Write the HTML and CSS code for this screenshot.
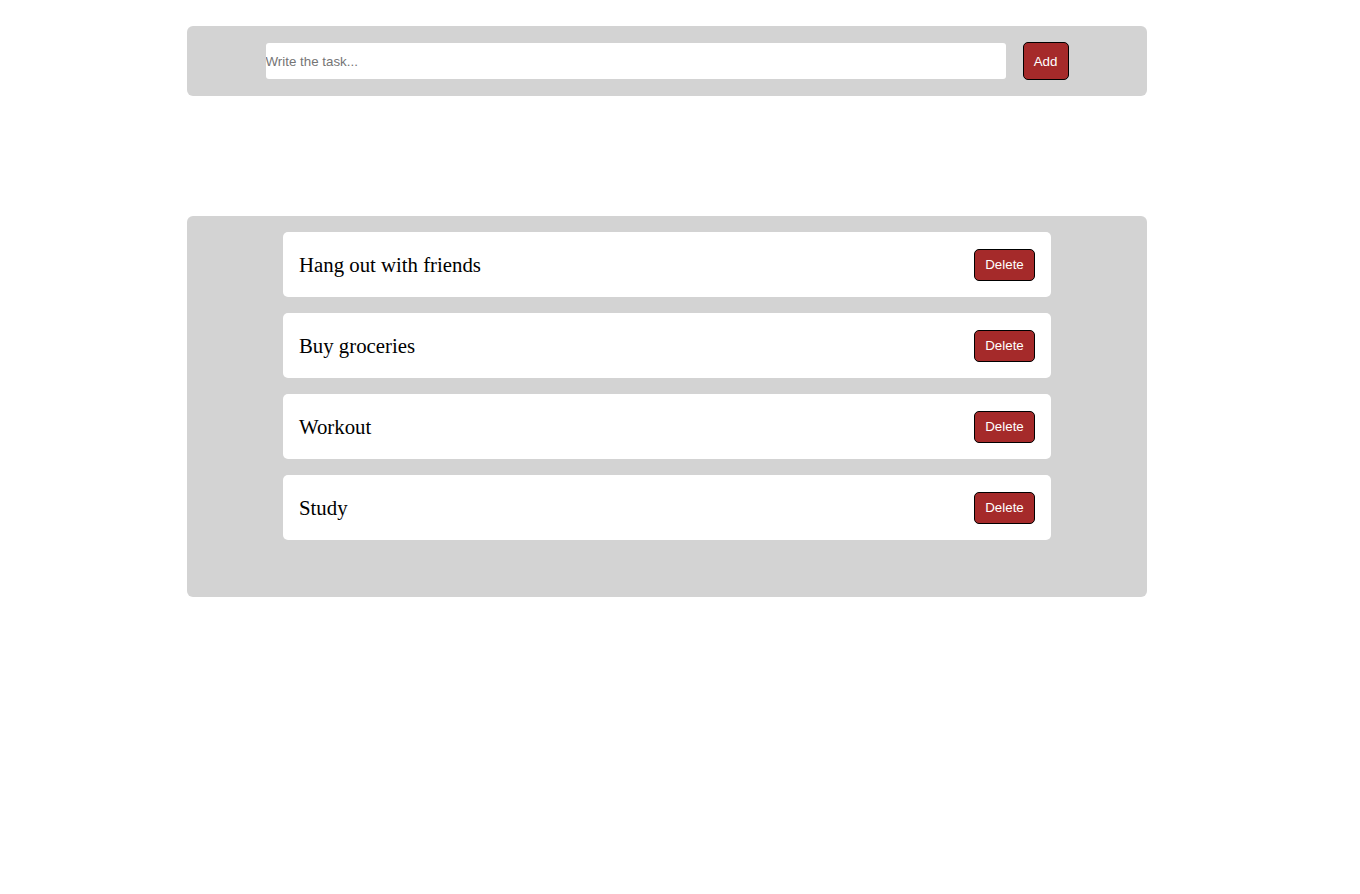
FILE: index.html
```html
<!DOCTYPE html>
<html>
<head>
<meta charset="utf-8">
<link rel="stylesheet" href="styles.css">
</head>
<body>
<div class="page">
  <form class="panel add-panel">
    <input class="task-input" type="text" placeholder="Write the task...">
    <button class="btn add-btn" type="button">Add</button>
  </form>
  <div class="panel list-panel">
    <div class="task"><span class="task-text">Hang out with friends</span><button class="btn del-btn" type="button">Delete</button></div>
    <div class="task"><span class="task-text">Buy groceries</span><button class="btn del-btn" type="button">Delete</button></div>
    <div class="task"><span class="task-text">Workout</span><button class="btn del-btn" type="button">Delete</button></div>
    <div class="task"><span class="task-text">Study</span><button class="btn del-btn" type="button">Delete</button></div>
  </div>
</div>
</body>
</html>
```
FILE: styles.css
```css
html, body {
  margin: 0;
  padding: 0;
  background: #ffffff;
}
.page {
  padding-top: 26px;
  padding-left: 187px;
}
.panel {
  width: 960px;
  background: #d3d3d3;
  border-radius: 6px;
  box-sizing: border-box;
}
.add-panel {
  height: 70px;
  margin: 0;
  display: flex;
  align-items: center;
  justify-content: center;
  gap: 17px;
}
.task-input {
  width: 740px;
  height: 36px;
  border: none;
  border-radius: 3px;
  padding: 0;
  box-sizing: border-box;
  font-family: "Liberation Sans", Arial, sans-serif;
  font-size: 13.33px;
  color: #000;
  background: #fff;
  outline: none;
}
.task-input::placeholder {
  color: #757575;
}
.btn {
  background: #a52a2a;
  color: #ffffff;
  border: 1px solid #000;
  border-radius: 5px;
  font-family: "Liberation Sans", Arial, sans-serif;
  font-size: 13.33px;
  padding: 0;
  cursor: pointer;
}
.add-btn {
  width: 46px;
  height: 38px;
}
.list-panel {
  margin-top: 120px;
  height: 381px;
  padding: 16px 0 0;
  display: flex;
  flex-direction: column;
  align-items: center;
  gap: 16px;
}
.task {
  width: 768px;
  height: 65px;
  background: #fff;
  border-radius: 5px;
  display: flex;
  align-items: center;
  justify-content: space-between;
  padding: 0 16px;
  box-sizing: border-box;
}
.task-text {
  font-family: "Liberation Serif", "Times New Roman", serif;
  font-size: 20.8px;
  line-height: 1;
  padding-top: 2px;
  color: #000;
}
.del-btn {
  width: 61px;
  height: 32px;
}
```
